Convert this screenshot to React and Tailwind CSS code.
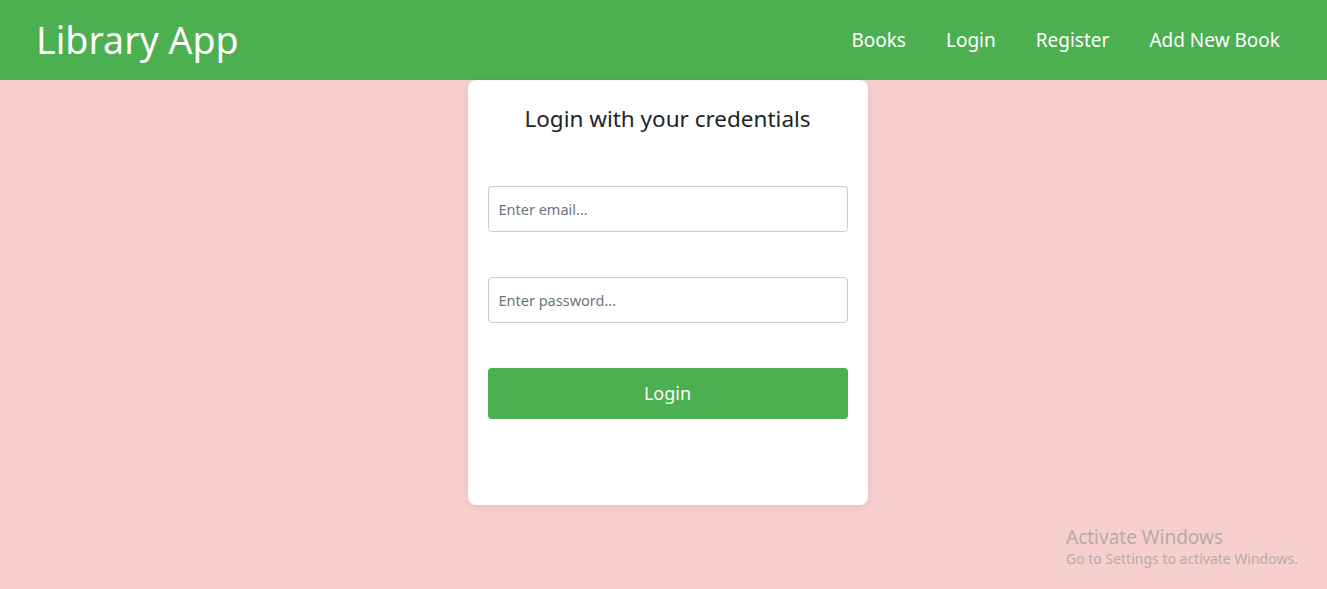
export default function App() {
  return (
    <div className="relative min-h-[589px] bg-[#f7cfcf] font-['Noto_Sans',sans-serif]">
      <nav className="flex h-20 items-center justify-between bg-[#4caf50] pl-9 pr-[47px]">
        <h1 className="text-[37.5px] leading-none text-white">Library App</h1>
        <ul className="flex items-center gap-10 text-[19px] text-white">
          <li>Books</li>
          <li>Login</li>
          <li>Register</li>
          <li>Add New Book</li>
        </ul>
      </nav>

      <div className="flex justify-center pl-2">
        <form className="flex h-[425px] w-[400px] flex-col rounded-lg bg-white px-5 pt-[21px] shadow-[0_2px_8px_rgba(0,0,0,0.08)]">
          <h2 className="text-center text-[22.5px] leading-9 text-[#212529]">
            Login with your credentials
          </h2>
          <input
            type="email"
            placeholder="Enter email..."
            className="mt-[49px] h-[46px] w-full rounded border border-[#ccc] px-2.5 text-[14.5px] text-[#495057] placeholder:text-[#6c757d]"
          />
          <input
            type="password"
            placeholder="Enter password..."
            className="mt-[45px] h-[46px] w-full rounded border border-[#ccc] px-2.5 text-[14.5px] text-[#495057] placeholder:text-[#6c757d]"
          />
          <button
            type="button"
            className="mt-[45px] h-[51px] w-full rounded bg-[#4caf50] text-[18px] text-white"
          >
            Login
          </button>
        </form>
      </div>

      <div className="absolute left-[1066px] top-[525px] text-[#b9a9aa]">
        <p className="text-[19px] leading-6">Activate Windows</p>
        <p className="text-[14px] leading-5">Go to Settings to activate Windows.</p>
      </div>
    </div>
  );
}
